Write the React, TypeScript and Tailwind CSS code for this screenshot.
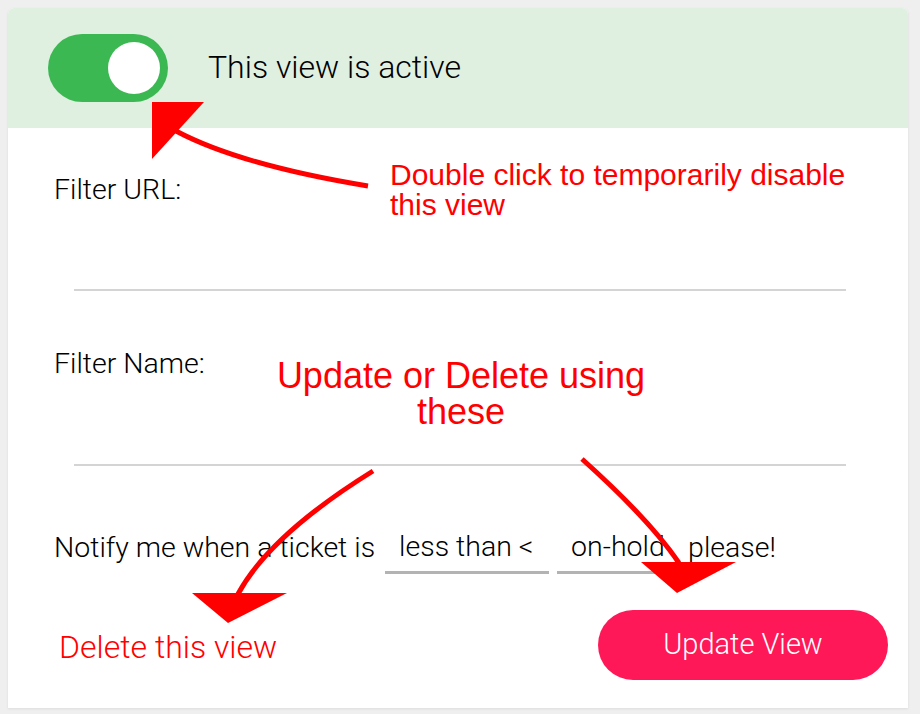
import React from 'react';

const ui = { fontFamily: 'Roboto, "Noto Sans", sans-serif' };
const note = { fontFamily: '"Liberation Sans", Arial, sans-serif' };

const Arrows = () => (
  <svg
    className="absolute inset-0 pointer-events-none"
    width="920"
    height="714"
    viewBox="0 0 920 714"
  >
    <g fill="none" stroke="#ff0000" strokeWidth="5" strokeLinecap="butt">
      <path d="M368 186 Q 240 165 176 131" />
      <path d="M373 471 Q 270 535 238 594" />
      <path d="M582 459 Q 650 520 679 563" />
    </g>
    <g fill="#ff0000">
      <polygon points="152,102 204,102 152,159" />
      <polygon points="192,593 287,593 228,623" />
      <polygon points="641,562 736,562 677,593" />
    </g>
  </svg>
);

export default function App() {
  return (
    <div className="relative w-[920px] h-[714px] bg-[#efefef] pt-2 pl-2" style={ui}>
      <div className="w-[900px] h-[700px] bg-white rounded-t-[6px] overflow-hidden shadow-[0_1px_3px_rgba(0,0,0,0.08)] flex flex-col">
        <div className="h-[120px] bg-[#dff0e1] flex items-center pl-[40px]">
          <div className="w-[120px] h-[68px] rounded-full bg-[#3cb853] flex items-center justify-end pr-[8px]">
            <div className="w-[52px] h-[52px] rounded-full bg-white" />
          </div>
          <span className="ml-[40px] -mt-[2px] text-[32px] leading-[36px] font-light text-black">
            This view is active
          </span>
        </div>

        <div className="flex flex-col px-[46px]">
          <div className="mt-[46px] h-[32px] text-[28.5px] leading-[32px] font-light text-black">
            Filter URL:
          </div>
          <div className="mt-[83px] ml-[20px] mr-[16px] h-[2px] bg-[#d4d4d4]" />

          <div className="mt-[57px] h-[32px] text-[28.5px] leading-[32px] font-light text-black">
            Filter Name:
          </div>
          <div className="mt-[84px] ml-[20px] mr-[16px] h-[2px] bg-[#d4d4d4]" />

          <div className="mt-[56px] flex items-center text-[28.5px] font-light text-black">
            <span className="leading-[32px]">Notify me when a ticket is</span>
            <div className="ml-[10px] w-[164px] h-[52px] border-b-[3px] border-[#b3b3b3] flex items-center pl-[14px] leading-[32px]">
              less than &lt;
            </div>
            <div className="ml-[8px] w-[122px] h-[52px] border-b-[3px] border-[#b3b3b3] flex items-center pl-[14px] leading-[32px]">
              on-hold
            </div>
            <span className="ml-[9px] leading-[32px]">please!</span>
          </div>
        </div>

        <div className="mt-[36px] flex items-center justify-between pl-[51px] pr-[20px]">
          <span className="text-[32px] leading-[36px] font-light text-[#ff0000] mt-[4px]">
            Delete this view
          </span>
          <button className="w-[290px] h-[70px] rounded-full bg-[#ff1857] text-white text-[29px] font-light">
            Update View
          </button>
        </div>
      </div>

      <Arrows />

      <div
        className="absolute left-[390px] top-[160px] text-[30px] leading-[30px] text-[#ff0000]"
        style={note}
      >
        Double click to temporarily disable
        <br />
        this view
      </div>
      <div
        className="absolute left-[261px] top-[358px] w-[400px] text-center text-[36px] leading-[36px] text-[#ff0000]"
        style={note}
      >
        Update or Delete using
        <br />
        these
      </div>
    </div>
  );
}
